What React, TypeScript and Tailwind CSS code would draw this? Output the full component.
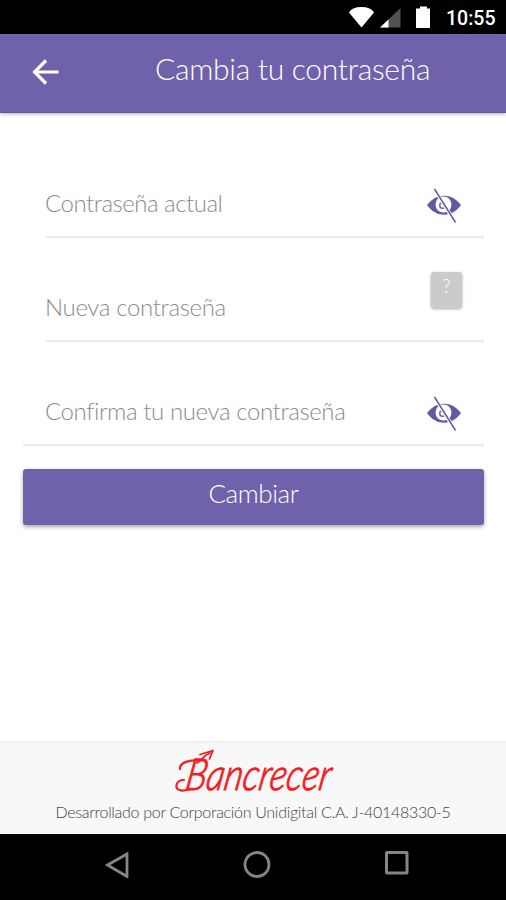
import React from "react";

interface IField {
  label: string;
  labelClass: string;
  className: string;
  children: React.ReactNode;
}

const StatusBar = () => (
  <div className="h-[34px] shrink-0 bg-black flex justify-end items-start pr-[10px]">
    <svg width="85" height="34" viewBox="0 0 85 34">
      <path d="M3 12.500 Q6 7 15.300 7 Q25 7 28 12.500 L15.500 27.500 Z" fill="#fff" />
      <path d="M54.500 8 V27.500 H34 Z" fill="#515151" />
      <path d="M42.500 19.500 V27.500 H34 Z" fill="#fff" />
      <path d="M74 6.500 h7 v2 h3 v19.500 h-14 v-19.500 h4 z" fill="#fff" />
    </svg>
    <span className="ml-[15px] w-[50px] whitespace-nowrap text-[19.5px] leading-[38px] font-medium text-white font-[Roboto,sans-serif]">
      10:55
    </span>
  </div>
);

const EyeOff = () => (
  <svg width="36" height="36" viewBox="0 0 36 36" className="shrink-0">
    <path
      d="M1 17 C10 4.500 26 4.500 35 17 C26 30 10 30 1 17 Z"
      fill="#6657a7"
    />
    <circle cx="17.500" cy="16.500" r="8" fill="#fff" />
    <circle cx="16.500" cy="17.500" r="2.800" fill="none" stroke="#6657a7" strokeWidth="1.300" />
    <path d="M8.500 1 L29.500 35" stroke="#fff" strokeWidth="3.500" />
    <path d="M8.500 1 L29.500 34.500" stroke="#6657a7" strokeWidth="1.500" />
  </svg>
);

const Field = ({ label, labelClass, className, children }: IField) => (
  <div className={`${className} h-[104px] flex items-end justify-between border-b-2 border-[#ebebeb]`}>
    <label className={`${labelClass} -ml-px whitespace-nowrap text-[24px] leading-[30px] font-light text-[#8c8c8c] pb-[18px]`}>
      {label}
    </label>
    {children}
  </div>
);

const Logo = () => (
  <svg width="170" height="54" viewBox="0 0 170 54" overflow="visible">
    <g fill="none" stroke="#f51d22" strokeWidth="2.200" strokeLinecap="round" strokeLinejoin="round">
      <path d="M22 17 C27 15 27 10 35 7 M25 8.500 L38 4.500 L34.500 13" strokeWidth="1.800" />
      <path d="M5 23 C4 17 15 13.500 22 14.500" />
      <path d="M14 43.500 C6 46 0.500 44 1.500 39 C2.500 35 6 34 9 34" />
    </g>
    <text
      transform="translate(9 44) skewX(-10)"
      textLength="145"
      lengthAdjust="spacingAndGlyphs"
      className="text-[44px] italic font-light font-[Lato,sans-serif]"
      fill="#f51d22"
      stroke="#f51d22"
      strokeWidth="1.100"
    >
      Bancrecer
    </text>
  </svg>
);

const NavBar = () => (
  <div className="h-[66px] shrink-0 bg-black flex items-start justify-between pl-[104px] pr-[96px] pt-[16px]">
    <svg width="28" height="28" viewBox="0 0 28 28" fill="none" stroke="#858585" strokeWidth="2.800">
      <path d="M3.500 15 L23 4 V26.500 Z" />
    </svg>
    <svg width="28" height="28" viewBox="0 0 28 28" fill="none" stroke="#858585" strokeWidth="2.800">
      <circle cx="14" cy="14.500" r="12" />
    </svg>
    <svg width="28" height="28" viewBox="0 0 28 28" fill="none" stroke="#858585" strokeWidth="3">
      <rect x="4.500" y="2.500" width="20.500" height="20.500" rx="0.500" />
    </svg>
  </div>
);

const App = () => {
  return (
    <div className="w-[506px] h-[900px] flex flex-col overflow-hidden bg-white font-[Lato,sans-serif]">
      <StatusBar />
      <header className="h-[79px] shrink-0 bg-[#7062aa] border-b border-[#62559a] shadow-[0_1px_4px_rgba(0,0,0,0.3)] flex items-start">
        <button className="pl-[32px] pt-[24px]">
          <svg width="28" height="28" viewBox="0 0 28 28" fill="none" stroke="#fff" strokeWidth="3.200">
            <path d="M26.500 14 H3 M14 2.500 L2.500 14 L14 25.500" />
          </svg>
        </button>
        <h1 className="ml-[95px] pt-[14px] text-[30px] leading-[40px] tracking-[-0.3px] font-light text-white whitespace-nowrap">
          Cambia tu contraseña
        </h1>
      </header>

      <form className="flex-1 flex flex-col pl-[23px] pr-[22px] pt-[21px]">
        <Field label="Contraseña actual" labelClass="tracking-[-0.5px]" className="ml-[23px]">
          <div className="pr-[22px] pb-[12px]">
            <EyeOff />
          </div>
        </Field>
        <Field label="Nueva contraseña" labelClass="tracking-[-0.35px]" className="ml-[23px]">
          <button
            type="button"
            className="mr-[22px] mb-[32px] w-[31px] h-[36px] rounded-[3px] bg-[#cbcbcb] text-white text-[19px] leading-[28px] font-light flex items-start justify-center shadow-[0_1px_3px_rgba(0,0,0,0.35)]"
          >
            ?
          </button>
        </Field>
        <Field label="Confirma tu nueva contraseña" labelClass="tracking-[-0.4px]" className="pl-[23px]">
          <div className="pr-[22px] pb-[12px]">
            <EyeOff />
          </div>
        </Field>
        <button
          type="button"
          className="mt-[23px] h-[56px] rounded-[3px] bg-[#7062aa] text-white text-[26px] leading-[49px] tracking-[-0.4px] font-light flex items-start justify-center shadow-[0_2px_4px_rgba(0,0,0,0.35)]"
        >
          Cambiar
        </button>
      </form>

      <footer className="h-[93px] shrink-0 border-t-2 border-[#f1f1f1] bg-[#f8f8f8] flex flex-col items-center">
        <div className="pt-[3px] pl-[14px]">
          <Logo />
        </div>
        <p className="pt-[2px] text-[16px] leading-[20px] tracking-[-0.3px] font-light text-[#444] whitespace-nowrap">
          Desarrollado por Corporación Unidigital C.A. J-40148330-5
        </p>
      </footer>
      <NavBar />
    </div>
  );
};

export default App;
